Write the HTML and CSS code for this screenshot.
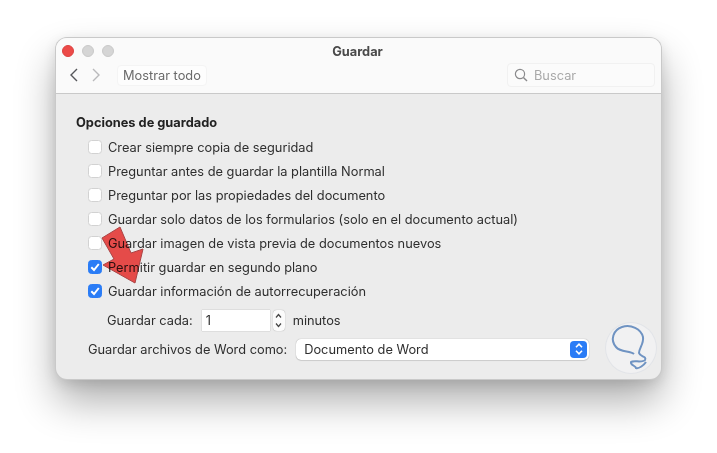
FILE: index.html
```html
<!DOCTYPE html>
<html lang="es">
<head>
<meta charset="utf-8">
<title>Guardar</title>
<link rel="stylesheet" href="styles.css">
</head>
<body>
<div class="window">
  <header class="toolbar">
    <div class="title-row">
      <div class="lights"><span class="light red"></span><span class="light"></span><span class="light"></span></div>
      <div class="title">Guardar</div>
    </div>
    <div class="nav-row">
      <svg class="chev" width="12" height="16" viewBox="0 0 12 16"><path d="M9 2 3 8l6 6" fill="none" stroke="#55565a" stroke-width="1.4"/></svg>
      <svg class="chev next" width="12" height="16" viewBox="0 0 12 16"><path d="M3 2l6 6-6 6" fill="none" stroke="#b9b9bb" stroke-width="1.4"/></svg>
      <div class="show-all">Mostrar todo</div>
      <div class="search">
        <svg width="14" height="14" viewBox="0 0 14 14"><circle cx="6" cy="6" r="4.6" fill="none" stroke="#8a8a8c" stroke-width="1.2"/><path d="M9.4 9.4 13 13" stroke="#8a8a8c" stroke-width="1.4"/></svg>
        <span>Buscar</span>
      </div>
    </div>
  </header>
  <main class="content">
    <h2 class="heading">Opciones de guardado</h2>
    <ul class="options">
      <li class="option"><span class="box"></span>Crear siempre copia de seguridad</li>
      <li class="option"><span class="box"></span>Preguntar antes de guardar la plantilla Normal</li>
      <li class="option"><span class="box"></span>Preguntar por las propiedades del documento</li>
      <li class="option"><span class="box"></span>Guardar solo datos de los formularios (solo en el documento actual)</li>
      <li class="option"><span class="box"></span>Guardar imagen de vista previa de documentos nuevos</li>
      <li class="option"><span class="box on"><svg width="14" height="14" viewBox="0 0 14 14"><path d="M3.3 7.3 6 10l4.8-6" fill="none" stroke="#fff" stroke-width="2"/></svg></span>Permitir guardar en segundo plano</li>
      <li class="option"><span class="box on"><svg width="14" height="14" viewBox="0 0 14 14"><path d="M3.3 7.3 6 10l4.8-6" fill="none" stroke="#fff" stroke-width="2"/></svg></span>Guardar información de autorrecuperación</li>
    </ul>
    <div class="interval">
      <span>Guardar cada:</span>
      <span class="field">1</span>
      <span class="stepper"><svg width="9" height="19" viewBox="0 0 9 19"><path d="M2 6.5 4.5 3.5 7 6.5M2 12.5l2.5 3 2.5-3" fill="none" stroke="#444" stroke-width="1.2"/></svg></span>
      <span class="unit">minutos</span>
    </div>
    <div class="format">
      <span>Guardar archivos de Word como:</span>
      <div class="select">
        <span>Documento de Word</span>
        <span class="select-btn"><svg width="10" height="14" viewBox="0 0 10 14"><path d="M2 5.2 5 2.2l3 3M2 8.8l3 3 3-3" fill="none" stroke="#fff" stroke-width="1.6"/></svg></span>
      </div>
    </div>
  </main>
  <svg class="arrow" width="44" height="58" viewBox="0 0 44 58"><path d="M19 1 1 12 13 33 2 39 34 57 42 23 30 27Z" fill="#f8514f" stroke="#b8494a" stroke-width="1"/></svg>
  <div class="logo">
    <svg width="50" height="50" viewBox="0 0 50 50"><path d="M28 31C24 27 15 30 10 24 4 17 7 7 16 4 25 1 35 6 37 14 38 21 33 25 33 30 34 34 41 33 39 37 37 40 27 37 25 39 24 42 30 43 30 45 33 46 38 42 40 39" fill="none" stroke="#6f93c2" stroke-width="2"/></svg>
  </div>
</div>
</body>
</html>
```
FILE: styles.css
```css
* { box-sizing: border-box; }
html, body { margin: 0; padding: 0; }
body {
  width: 717px;
  height: 453px;
  overflow: hidden;
  background: #fff;
  font-family: Inter, "Liberation Sans", sans-serif;
  font-size: 12.8px;
  color: #2e2e2e;
  padding: 38px 0 0 56px;
}
.window {
  position: relative;
  width: 605px;
  height: 341px;
  border-radius: 11px;
  background: #ececec;
  box-shadow: 0 0 0 1px #c9c9c9, 0 22px 40px rgba(0,0,0,.32), 0 4px 14px rgba(0,0,0,.12);
}
.toolbar {
  height: 56px;
  background: #fafafa;
  border-bottom: 1px solid #c9c9c9;
  border-radius: 11px 11px 0 0;
  display: flex;
  flex-direction: column;
}
.title-row {
  position: relative;
  height: 26px;
  display: flex;
  align-items: center;
  justify-content: center;
}
.lights {
  position: absolute;
  left: 6px;
  top: 7px;
  display: flex;
  gap: 8px;
}
.light { width: 12px; height: 12px; border-radius: 50%; background: #d5d5d5; border: 1px solid #c9c9c9; }
.light.red { background: #ec4a48; border-color: #dd4240; }
.title { font-weight: 700; font-size: 12.8px; color: #4a4a4a; margin-left: -2px; }
.nav-row {
  display: flex;
  align-items: center;
  height: 22px;
  padding-left: 12px;
}
.chev.next { margin-left: 10px; }
.show-all {
  margin-left: 15px;
  height: 21px;
  padding: 0 5px;
  line-height: 19px;
  color: #6a6a6a;
  background: #fdfdfd;
  border: 1px solid #f4f4f4;
  border-radius: 4px;
}
.search {
  margin-left: auto;
  margin-right: 6px;
  width: 148px;
  height: 24px;
  display: flex;
  align-items: center;
  gap: 6px;
  padding-left: 6px;
  color: #a9a9a9;
  background: #fbfbfb;
  border: 1px solid #f1f1f1;
  border-radius: 4px;
}
.content { padding: 21px 0 0 20px; }
.heading { margin: 0; font-size: 12.8px; line-height: 16px; font-weight: 700; color: #222; }
.options { list-style: none; margin: 4px 0 0 12px; padding: 0; }
.option { display: flex; align-items: center; height: 24px; }
.box {
  width: 14px;
  height: 14px;
  margin-right: 6px;
  background: #fff;
  border: 1px solid #d2d2d2;
  border-radius: 3.5px;
  flex: none;
  position: relative;
}
.box.on { background: #2a7cf6; border-color: #2a7cf6; }
.box svg { position: absolute; left: -1px; top: -1px; }
.interval {
  display: flex;
  align-items: center;
  height: 24px;
  margin: 5px 0 0 31px;
}
.field {
  margin-left: 9px;
  width: 68px;
  height: 21px;
  line-height: 21px;
  padding-left: 4px;
  background: #fff;
  box-shadow: 0 0 1px rgba(0,0,0,.35);
}
.stepper {
  margin-left: 3px;
  width: 12px;
  height: 21px;
  display: flex;
  align-items: center;
  justify-content: center;
  background: #fbfbfb;
  border-radius: 4px;
  box-shadow: 0 0 1px rgba(0,0,0,.4);
}
.unit { margin-left: 8px; }
.format {
  display: flex;
  align-items: center;
  height: 22px;
  margin: 6px 0 0 12px;
}
.select {
  margin-left: 9px;
  width: 293px;
  height: 21px;
  padding: 0 2px 0 8px;
  display: flex;
  align-items: center;
  justify-content: space-between;
  background: #fff;
  border-radius: 5px;
  box-shadow: 0 0 1px rgba(0,0,0,.4), 0 1px 1px rgba(0,0,0,.1);
}
.select-btn {
  width: 17px;
  height: 17px;
  display: flex;
  align-items: center;
  justify-content: center;
  background: #2a7cf6;
  border-radius: 4px;
}
.arrow { position: absolute; left: 45px; top: 188px; mix-blend-mode: multiply; }
.logo {
  position: absolute;
  left: 550px;
  top: 285px;
  width: 50px;
  height: 50px;
  border-radius: 50%;
  background: #f1f1f2;
  box-shadow: 0 0 0 1px #e2e4e8;
}
```
